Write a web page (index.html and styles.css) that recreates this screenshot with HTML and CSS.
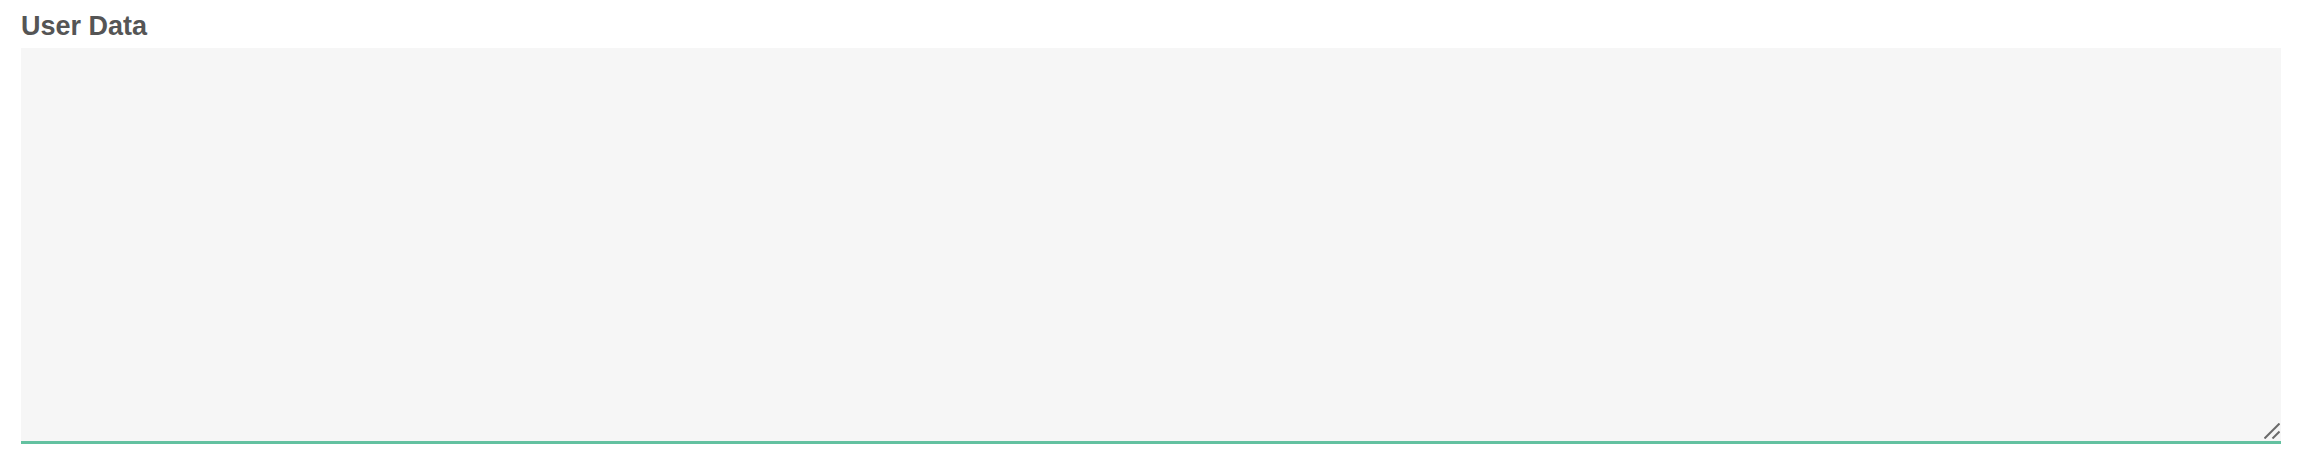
FILE: index.html
```html
<!DOCTYPE html>
<html>
<head>
<meta charset="utf-8">
<link rel="stylesheet" href="styles.css">
</head>
<body>
<div class="field">
  <label class="field-label" for="ud">User Data</label>
  <div class="field-box">
    <textarea id="ud" class="field-input"></textarea>
    <svg class="grip" width="16" height="16" viewBox="0 0 16 16" aria-hidden="true">
      <line x1="0.5" y1="15.5" x2="15.5" y2="0.5" stroke="#6a6a6a" stroke-width="2"/>
      <line x1="8.5" y1="15.5" x2="15.5" y2="8.5" stroke="#6a6a6a" stroke-width="2"/>
    </svg>
  </div>
</div>
</body>
</html>
```
FILE: styles.css
```css
html, body {
  margin: 0;
  padding: 0;
  background: #ffffff;
}
.field {
  display: flex;
  flex-direction: column;
  padding: 10px 25px 0 21px;
}
.field-label {
  font-family: "Liberation Sans", Arial, sans-serif;
  font-weight: bold;
  font-size: 27px;
  line-height: 32px;
  color: #555555;
  margin-bottom: 6px;
}
.field-box {
  position: relative;
  width: 2260px;
  height: 396px;
}
.field-input {
  display: block;
  box-sizing: border-box;
  width: 100%;
  height: 100%;
  margin: 0;
  padding: 8px;
  border: none;
  border-bottom: 3px solid #63c1a0;
  border-radius: 0;
  background: #f6f6f6;
  outline: none;
  resize: none;
  font-family: "Liberation Sans", Arial, sans-serif;
  font-size: 20px;
}
.grip {
  position: absolute;
  right: 1px;
  bottom: 5px;
  pointer-events: none;
}
```
